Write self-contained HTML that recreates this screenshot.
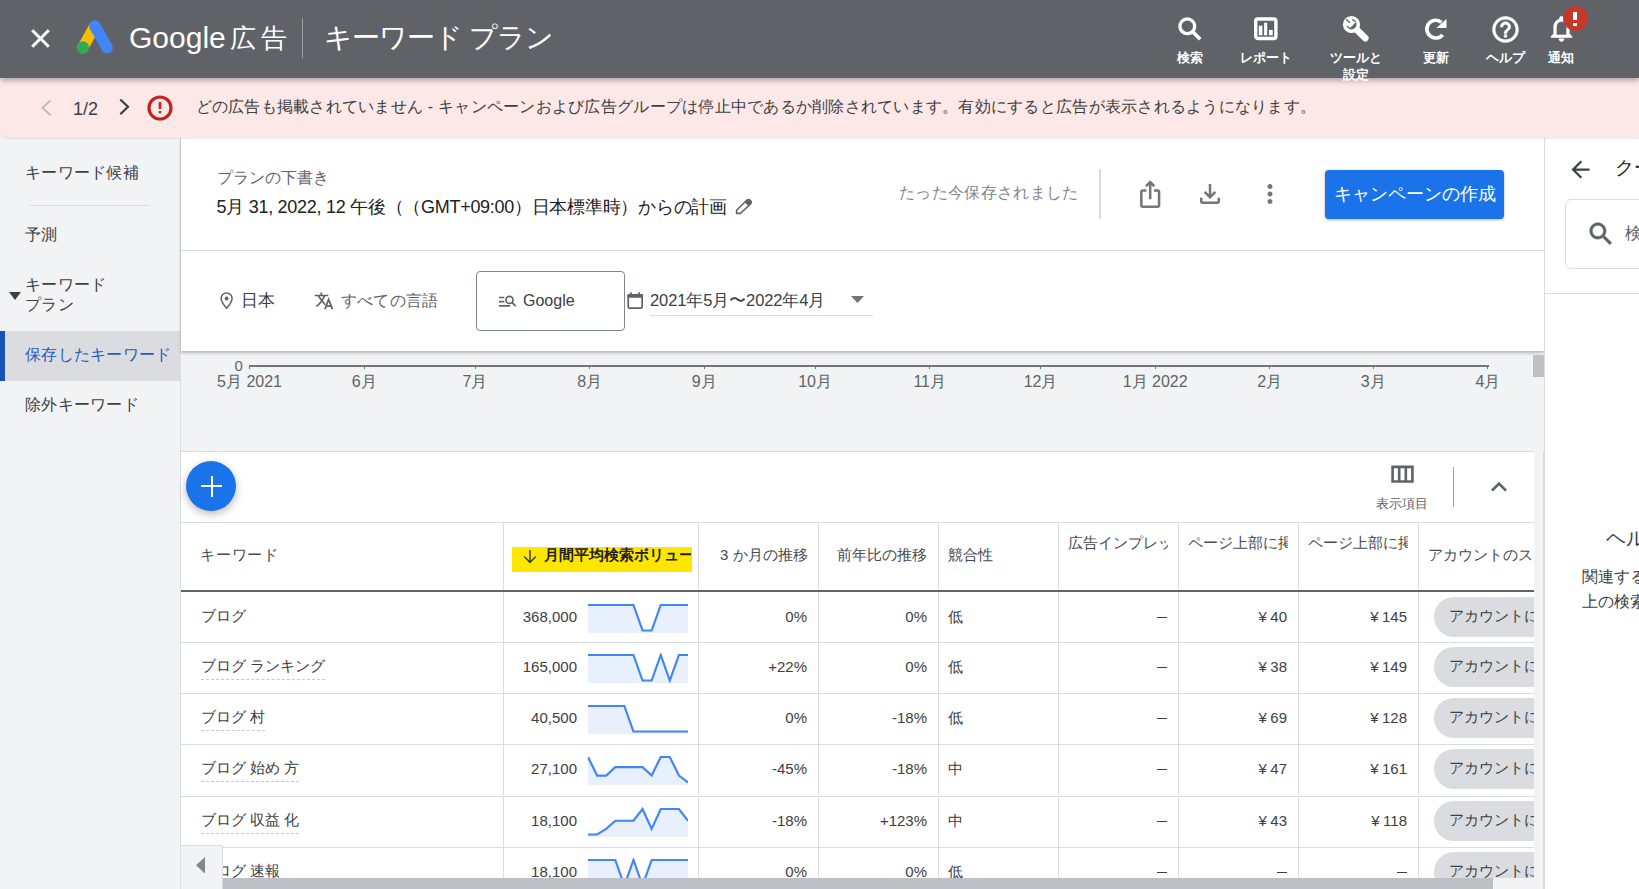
<!DOCTYPE html><html><head><meta charset="utf-8"><style>
*{box-sizing:border-box;margin:0;padding:0}
html,body{width:1639px;height:889px;overflow:hidden;background:#f1f3f4;font-family:"Liberation Sans",sans-serif;color:#3c4043}
.a{position:absolute;white-space:nowrap}
svg{display:block;position:absolute}
.tl{position:absolute;color:#fff;font-size:13px;white-space:nowrap;font-weight:bold;line-height:17.5px;text-align:center}
.ni{position:absolute;left:25px;font-size:16px;color:#3c4043;white-space:nowrap;line-height:20px;letter-spacing:0.3px}
.hd{position:absolute;font-size:15px;color:#474a4f;white-space:nowrap;line-height:18px}
.cell{position:absolute;font-size:15px;color:#3c4043;white-space:nowrap;line-height:18px}
.r{text-align:right}
.vl{position:absolute;width:1px;background:#dadce0}
.hl{position:absolute;height:1px;background:#dadce0}
.kw{border-bottom:1px dashed #c6c9cd;padding-bottom:5px}
.chip{position:absolute;left:1434px;width:140px;height:40px;border-radius:20px;background:#dadce0;font-size:15px;line-height:38px;padding-left:15px;color:#3c4043}
</style></head><body>
<div class="a" style="left:0;top:0;width:1639px;height:78px;background:#5f6368;z-index:5;box-shadow:0 2px 6px rgba(0,0,0,.35)">
<svg style="left:24.5px;top:23px" width="31" height="31" viewBox="0 0 24 24"><path fill="#fff" stroke="#fff" stroke-width="0.4" d="M19 6.41L17.59 5 12 10.59 6.41 5 5 6.41 10.59 12 5 17.59 6.41 19 12 13.41 17.59 19 19 17.59 13.41 12z"/></svg>
<svg style="left:70px;top:15px" width="50" height="45" viewBox="0 0 50 45"><path d="M24.8 10.9 L12.9 32.6" stroke="#fbbc04" stroke-width="11.2"/><path d="M24.8 10.9 L37.2 32.9" stroke="#4285f4" stroke-width="11.4" stroke-linecap="round"/><circle cx="12.9" cy="32.6" r="6.3" fill="#34a853"/></svg>
<div class="a" style="left:129px;top:18px;font-size:30px;line-height:40px;color:#fff">Google</div><div class="a" style="left:230px;top:17.5px;font-size:26px;line-height:40px;color:#fff;letter-spacing:5px">広告</div>
<div class="a" style="left:302px;top:18px;width:1px;height:40px;background:#9aa0a6"></div>
<div class="a" style="left:324px;top:18px;font-size:28px;line-height:40px;color:#fff;letter-spacing:-1px">キーワード プラン</div>
<svg style="left:1176px;top:15px" width="28" height="28" viewBox="0 0 28 28"><circle cx="11.3" cy="11.3" r="7.4" fill="none" stroke="#fff" stroke-width="3.3"/><path d="M16.5 16.5 L24.2 24.2" stroke="#fff" stroke-width="3.6"/></svg>
<div class="tl" style="left:1140px;width:100px;top:48.5px">検索</div>
<svg style="left:1250px;top:13px" width="32" height="32" viewBox="0 0 32 32"><rect x="5.7" y="6" width="20.2" height="19.5" rx="2" fill="none" stroke="#fff" stroke-width="3.4"/><rect x="8.8" y="12.7" width="3.6" height="9.6" fill="#fff"/><rect x="14.1" y="9.7" width="3.1" height="12.6" fill="#fff"/><rect x="19" y="16.9" width="3.7" height="5.4" fill="#fff"/></svg>
<div class="tl" style="left:1216px;width:100px;top:48.5px">レポート</div>
<svg style="left:1340px;top:12px" width="32" height="32" viewBox="0 0 32 32"><path d="M12.5 13.5 L25.3 26.2" stroke="#fff" stroke-width="6.6" stroke-linecap="round"/><circle cx="11.5" cy="12.5" r="8.6" fill="#fff"/><path d="M6.4 13.2 A5.1 5.1 0 1 0 15.7 9.5 L15.2 10.7 L10.4 15.7 Z" fill="#5f6368"/><path d="M6.12 7.2 L10.08 10.8 M12.24 7.2 L15.48 9.72" stroke="#5f6368" stroke-width="1.3"/></svg>
<div class="tl" style="left:1306px;width:100px;top:48.5px">ツールと<br>設定</div>
<svg style="left:1420px;top:13px" width="32" height="32" viewBox="0 0 32 32"><path d="M21.5 9.3 A8.9 8.9 0 1 0 22.6 21.8" fill="none" stroke="#fff" stroke-width="3.6"/><path d="M16.4 15.1 H26.5 V6 Z" fill="#fff"/></svg>
<div class="tl" style="left:1386px;width:100px;top:48.5px">更新</div>
<svg style="left:1489.5px;top:13.5px" width="31" height="31" viewBox="0 0 24 24"><path fill="#fff" stroke="#fff" stroke-width="0.45" d="M11 18h2v-2h-2v2zm1-16C6.48 2 2 6.48 2 12s4.48 10 10 10 10-4.48 10-10S17.52 2 12 2zm0 18c-4.41 0-8-3.59-8-8s3.59-8 8-8 8 3.59 8 8-3.59 8-8 8zm0-14c-2.21 0-4 1.79-4 4h2c0-1.1.9-2 2-2s2 .9 2 2c0 2-3 1.75-3 5h2c0-2.25 3-2.5 3-5 0-2.21-1.79-4-4-4z"/></svg>
<div class="tl" style="left:1455px;width:100px;top:48.5px">ヘルプ</div>
<svg style="left:1546px;top:13px" width="31" height="31" viewBox="0 0 24 24"><path fill="#fff" stroke="#fff" stroke-width="0.45" d="M12 22c1.1 0 2-.9 2-2h-4c0 1.1.9 2 2 2zm6-6v-5c0-3.07-1.63-5.64-4.5-6.32V4c0-.83-.67-1.5-1.5-1.5s-1.5.67-1.5 1.5v.68C7.64 5.36 6 7.92 6 11v5l-2 2v1h16v-1l-2-2zm-2 1H8v-6c0-2.48 1.51-4.5 4-4.5s4 2.02 4 4.5v6z"/></svg>
<div class="tl" style="left:1511px;width:100px;top:48.5px">通知</div>
<div class="a" style="left:1562.8px;top:6.3px;width:24.8px;height:24.8px;border-radius:50%;background:#c5392a"></div><div class="a" style="left:1573.3px;top:12.1px;width:3.4px;height:8.1px;background:#fff"></div><div class="a" style="left:1573.3px;top:22.5px;width:3.4px;height:3.1px;background:#fff"></div>
</div>
<div class="a" style="left:0;top:78px;width:1639px;height:60px;background:#fce8e6;border-radius:9px 0 0 9px;z-index:4;box-shadow:0 1px 1px rgba(0,0,0,.08)">
<svg style="left:36px;top:15px" width="20" height="30" viewBox="0 0 20 30"><path d="M14.5 7.5 L6.5 14.8 L14.5 22.2" fill="none" stroke="#b0b4b9" stroke-width="1.6"/></svg>
<div class="a" style="left:73px;top:21px;font-size:18px;line-height:20px;color:#3c4043">1/2</div>
<svg style="left:114px;top:14px" width="20" height="30" viewBox="0 0 20 30"><path d="M6.3 7.5 L14 14.8 L6.3 22.2" fill="none" stroke="#3c4043" stroke-width="2.2"/></svg>
<svg style="left:146px;top:16px" width="28" height="28" viewBox="0 0 28 28"><circle cx="14" cy="14" r="11" fill="none" stroke="#c5221f" stroke-width="3.2"/><rect x="12.7" y="8" width="2.6" height="7" fill="#c5221f"/><rect x="12.7" y="17" width="2.6" height="2.3" fill="#c5221f"/></svg>
<div class="a" style="left:195.5px;top:19.5px;font-size:16px;line-height:18px;color:#3c4043;letter-spacing:0.26px">どの広告も掲載されていません - キャンペーンおよび広告グループは停止中であるか削除されています。有効にすると広告が表示されるようになります。</div>
</div>
<div class="ni" style="top:163px">キーワード候補</div>
<div class="hl" style="left:30px;top:205px;width:120px"></div>
<div class="ni" style="top:225px">予測</div>
<div class="ni" style="top:275px">キーワード<br>プラン</div>
<svg style="left:9px;top:292px" width="12" height="8" viewBox="0 0 12 8"><path d="M0 0h12L6 8z" fill="#3c4043"/></svg>
<div class="a" style="left:0;top:331px;width:180px;height:50px;background:#dadce0"></div>
<div class="a" style="left:0;top:331px;width:5px;height:50px;background:#1b50b5"></div>
<div class="ni" style="top:345px;color:#1f5bc4;letter-spacing:0.3px">保存したキーワード</div>
<div class="ni" style="top:395px">除外キーワード</div>
<div class="vl" style="left:180px;top:138px;height:751px"></div>
<div class="a" style="left:181px;top:138px;width:1363px;height:213px;background:#fff;box-shadow:0 2px 3px rgba(0,0,0,.25)">
</div>
<div class="hl" style="left:181px;top:250px;width:1363px"></div>
<div class="a" style="left:216.5px;top:168.5px;font-size:16px;line-height:18px;color:#5f6368">プランの下書き</div>
<div class="a" style="left:216.5px;top:196.5px;font-size:18px;line-height:20px;color:#202124;letter-spacing:-0.28px">5月 31, 2022, 12 午後（（GMT+09:00）日本標準時）からの計画</div>
<svg style="left:731px;top:195px" width="24" height="24" viewBox="0 0 24 24"><path d="M5.6 18.4 V15.3 L15.7 5.2 A2.7 2.7 0 0 1 19.5 9 L9.4 18.4 Z" fill="none" stroke="#5f6368" stroke-width="1.6" stroke-linejoin="round"/><path d="M15.7 5.2 A2.7 2.7 0 0 1 19.5 9 L17.4 11.1 L13.6 7.3 Z" fill="#5f6368"/></svg>
<div class="a" style="left:899px;top:183.5px;font-size:16px;line-height:18px;color:#80868b;letter-spacing:0.35px">たった今保存されました</div>
<div class="vl" style="left:1098.5px;top:169px;height:50px;width:2px"></div>
<svg style="left:1134.5px;top:178.6px" width="30.4" height="30.4" viewBox="0 0 24 24"><path fill="#757575" d="M16 5l-1.42 1.42-1.59-1.59V16h-1.98V4.83L9.42 6.42 8 5l4-4 4 4zm4 5v11c0 1.1-.9 2-2 2H6c-1.11 0-2-.9-2-2V10c0-1.11.89-2 2-2h3v2H6v11h12V10h-3V8h3c1.1 0 2 .89 2 2z"/></svg>
<svg style="left:1194.6px;top:178.8px" width="30" height="30" viewBox="0 0 24 24"><path fill="#757575" d="M18 15v3H6v-3H4v3c0 1.1.9 2 2 2h12c1.1 0 2-.9 2-2v-3h-2zm-1-4l-1.41-1.41L13 12.17V4h-2v8.17L8.41 9.59 7 11l5 5 5-5z"/></svg>
<svg style="left:1254.75px;top:179px" width="30" height="30" viewBox="0 0 24 24"><path fill="#757575" d="M12 8c1.1 0 2-.9 2-2s-.9-2-2-2-2 .9-2 2 .9 2 2 2zm0 2c-1.1 0-2 .9-2 2s.9 2 2 2 2-.9 2-2-.9-2-2-2zm0 6c-1.1 0-2 .9-2 2s.9 2 2 2 2-.9 2-2-.9-2-2-2z"/></svg>
<div class="a" style="left:1325px;top:170px;width:179px;height:49px;border-radius:4px;background:#1a73e8;box-shadow:0 1px 3px rgba(0,0,0,.3);color:#fff;font-size:18px;line-height:49px;text-align:center">キャンペーンの作成</div>
<svg style="left:216px;top:289px" width="22" height="22" viewBox="0 0 22 22"><path d="M10.6 19.3 C7.2 15.2 5.1 12.5 5.1 9.4 A5.5 5.5 0 0 1 16.1 9.4 C16.1 12.5 14 15.2 10.6 19.3 Z" fill="none" stroke="#5f6368" stroke-width="1.5" stroke-linejoin="round"/><circle cx="10.6" cy="9.5" r="1.9" fill="#5f6368"/></svg>
<div class="a" style="left:241px;top:291px;font-size:17px;line-height:20px;color:#3c4043">日本</div>
<svg style="left:312px;top:289px" width="24" height="24" viewBox="0 0 24 24"><path d="M2.8 6.5 H16.3 M9.3 3.5 V6.5 M6.3 7.1 L13.1 15.8 M12.3 7.1 C11 11 8.5 14.5 4.3 17.4" fill="none" stroke="#5f6368" stroke-width="1.7"/><path d="M12.9 20.2 L16.6 10.4 L20.4 20.2 M14 17.2 H19.2" fill="none" stroke="#5f6368" stroke-width="1.8"/></svg>
<div class="a" style="left:341px;top:291px;font-size:16px;line-height:20px;color:#5f6368;letter-spacing:0.2px">すべての言語</div>
<div class="a" style="left:476px;top:271px;width:149px;height:60px;border:1px solid #80868b;border-radius:4px;background:#fff"></div>
<svg style="left:492px;top:288px" width="26" height="26" viewBox="0 0 26 26"><path d="M7 9.5 H12.3 M7 13.7 H12.3 M7 17.9 H18.1" stroke="#5f6368" stroke-width="1.7"/><circle cx="17.5" cy="11.9" r="3.5" fill="none" stroke="#5f6368" stroke-width="1.7"/><path d="M20.1 14.6 L23.7 18.1" stroke="#5f6368" stroke-width="1.8"/></svg>
<div class="a" style="left:523px;top:291px;font-size:16px;line-height:20px;color:#3c4043">Google</div>
<svg style="left:620px;top:285px" width="30" height="30" viewBox="0 0 30 30"><rect x="8.25" y="9.95" width="13.9" height="13.2" rx="1.2" fill="none" stroke="#5f6368" stroke-width="1.7"/><rect x="7.4" y="9.1" width="15.6" height="3.7" rx="1" fill="#5f6368"/><rect x="10.1" y="7.3" width="1.7" height="2.5" fill="#5f6368"/><rect x="18.3" y="7.3" width="1.8" height="2.5" fill="#5f6368"/></svg>
<div class="a" style="left:650px;top:290px;font-size:16.5px;line-height:20px;color:#3c4043;letter-spacing:-0.1px">2021年5月〜2022年4月</div>
<svg style="left:851px;top:296px" width="13" height="8" viewBox="0 0 13 8"><path d="M0 0h13L6.5 7z" fill="#757575"/></svg>
<div class="hl" style="left:650px;top:315px;width:223px"></div>
<div class="a" style="left:234.5px;top:357px;font-size:15px;line-height:18px;color:#5f6368">0</div>
<div class="a" style="left:249px;top:365px;width:1240px;height:2px;background:#757575"></div>
<div class="a" style="left:249.0px;top:365px;width:1px;height:4px;background:#757575"></div>
<div class="a" style="left:189.5px;width:120px;text-align:center;top:373px;font-size:16px;line-height:18px;color:#5f6368">5月 2021</div>
<div class="a" style="left:363.6px;top:365px;width:1px;height:4px;background:#757575"></div>
<div class="a" style="left:304.1px;width:120px;text-align:center;top:373px;font-size:16px;line-height:18px;color:#5f6368">6月</div>
<div class="a" style="left:474.5px;top:365px;width:1px;height:4px;background:#757575"></div>
<div class="a" style="left:415px;width:120px;text-align:center;top:373px;font-size:16px;line-height:18px;color:#5f6368">7月</div>
<div class="a" style="left:589.1px;top:365px;width:1px;height:4px;background:#757575"></div>
<div class="a" style="left:529.6px;width:120px;text-align:center;top:373px;font-size:16px;line-height:18px;color:#5f6368">8月</div>
<div class="a" style="left:703.7px;top:365px;width:1px;height:4px;background:#757575"></div>
<div class="a" style="left:644.2px;width:120px;text-align:center;top:373px;font-size:16px;line-height:18px;color:#5f6368">9月</div>
<div class="a" style="left:814.6px;top:365px;width:1px;height:4px;background:#757575"></div>
<div class="a" style="left:755.1px;width:120px;text-align:center;top:373px;font-size:16px;line-height:18px;color:#5f6368">10月</div>
<div class="a" style="left:929.2px;top:365px;width:1px;height:4px;background:#757575"></div>
<div class="a" style="left:869.7px;width:120px;text-align:center;top:373px;font-size:16px;line-height:18px;color:#5f6368">11月</div>
<div class="a" style="left:1040.1px;top:365px;width:1px;height:4px;background:#757575"></div>
<div class="a" style="left:980.5999999999999px;width:120px;text-align:center;top:373px;font-size:16px;line-height:18px;color:#5f6368">12月</div>
<div class="a" style="left:1154.7px;top:365px;width:1px;height:4px;background:#757575"></div>
<div class="a" style="left:1095.2px;width:120px;text-align:center;top:373px;font-size:16px;line-height:18px;color:#5f6368">1月 2022</div>
<div class="a" style="left:1269.3px;top:365px;width:1px;height:4px;background:#757575"></div>
<div class="a" style="left:1209.8px;width:120px;text-align:center;top:373px;font-size:16px;line-height:18px;color:#5f6368">2月</div>
<div class="a" style="left:1372.8px;top:365px;width:1px;height:4px;background:#757575"></div>
<div class="a" style="left:1313.3px;width:120px;text-align:center;top:373px;font-size:16px;line-height:18px;color:#5f6368">3月</div>
<div class="a" style="left:1487.4px;top:365px;width:1px;height:4px;background:#757575"></div>
<div class="a" style="left:1427.9px;width:120px;text-align:center;top:373px;font-size:16px;line-height:18px;color:#5f6368">4月</div>
<div class="a" style="left:1533px;top:355px;width:11px;height:22px;background:#bdc1c6"></div>
<div class="a" style="left:181px;top:451px;width:1353px;height:438px;background:#fff;border-top:1px solid #dadce0"></div>
<div class="a" style="left:1534px;top:451px;width:10px;height:438px;background:#f1f3f4;border-right:1px solid #dadce0"></div>
<div class="a" style="left:186px;top:461px;width:50px;height:50px;border-radius:50%;background:#1a73e8;box-shadow:0 3px 8px rgba(0,0,0,.28)"></div>
<div class="a" style="left:201px;top:485px;width:21px;height:2px;background:#fff"></div>
<div class="a" style="left:210.5px;top:475.5px;width:2px;height:21px;background:#fff"></div>
<svg style="left:1386px;top:459.4px" width="31.7" height="31.7" viewBox="0 0 24 24"><path fill="#5f6368" d="M4 5v13h17V5H4zm10 2v9h-3V7h3zM6 7h3v9H6V7zm13 9h-3V7h3v9z"/></svg>
<div class="a" style="left:1352px;top:495.5px;width:100px;text-align:center;font-size:13px;line-height:16px;color:#5f6368">表示項目</div>
<div class="vl" style="left:1453px;top:467px;height:40px;background:#9aa0a6"></div>
<svg style="left:1483px;top:471px" width="32" height="32" viewBox="0 0 24 24"><path fill="#5f6368" d="M7.41 15.41L12 10.83l4.59 4.58L18 14l-6-6-6 6z"/></svg>
<div class="hl" style="left:181px;top:522px;width:1353px"></div>
<div class="a" style="left:181px;top:590px;width:1353px;height:2px;background:#5f6368"></div>
<div class="vl" style="left:503px;top:523px;height:67px"></div>
<div class="vl" style="left:698px;top:523px;height:67px"></div>
<div class="vl" style="left:818px;top:523px;height:67px"></div>
<div class="vl" style="left:938px;top:523px;height:67px"></div>
<div class="vl" style="left:1058px;top:523px;height:67px"></div>
<div class="vl" style="left:1178px;top:523px;height:67px"></div>
<div class="vl" style="left:1298px;top:523px;height:67px"></div>
<div class="vl" style="left:1418px;top:523px;height:67px"></div>
<div class="hd" style="left:200px;top:546px;letter-spacing:0.8px">キーワード</div>
<div class="a" style="left:512px;top:547px;width:180px;height:25px;background:#ffe600"></div>
<svg style="left:520px;top:546px" width="20" height="20" viewBox="0 0 20 20"><path d="M10 4 V16.5 M4.2 10.5 L10 16.4 L15.8 10.5" fill="none" stroke="#3c4043" stroke-width="1.5"/></svg>
<div class="hd" style="left:543.5px;top:546px;width:147.5px;overflow:hidden;color:#202124;font-weight:bold">月間平均検索ボリューム</div>
<div class="hd" style="left:720px;top:546px">3 か月の推移</div>
<div class="hd" style="left:837px;top:546px">前年比の推移</div>
<div class="hd" style="left:948px;top:546px">競合性</div>
<div class="hd" style="left:1068px;top:534px;width:100px;overflow:hidden">広告インプレッション</div>
<div class="hd" style="left:1188px;top:534px;width:100px;overflow:hidden">ページ上部に掲載</div>
<div class="hd" style="left:1308px;top:534px;width:100px;overflow:hidden">ページ上部に掲載</div>
<div class="hd" style="left:1428px;top:546px;width:106px;overflow:hidden">アカウントのステータス</div>
<div class="vl" style="left:503px;top:592px;height:51px"></div>
<div class="vl" style="left:698px;top:592px;height:51px"></div>
<div class="vl" style="left:818px;top:592px;height:51px"></div>
<div class="vl" style="left:938px;top:592px;height:51px"></div>
<div class="vl" style="left:1058px;top:592px;height:51px"></div>
<div class="vl" style="left:1178px;top:592px;height:51px"></div>
<div class="vl" style="left:1298px;top:592px;height:51px"></div>
<div class="vl" style="left:1418px;top:592px;height:51px"></div>
<div class="cell" style="left:201px;top:607px"><span class="">ブログ</span></div>
<div class="cell r" style="left:477px;width:100px;top:608px">368,000</div>
<svg style="left:588px;top:603px" width="100" height="30" viewBox="0 0 100 30"><polygon points="0,30 0.00,2.00 9.09,2.00 18.18,2.00 27.27,2.00 36.36,2.00 45.45,2.00 54.55,27.50 63.64,27.50 72.73,2.00 81.82,2.00 90.91,2.00 100.00,2.00 100,30" fill="#e8f0fe"/><polyline points="0.00,2.00 9.09,2.00 18.18,2.00 27.27,2.00 36.36,2.00 45.45,2.00 54.55,27.50 63.64,27.50 72.73,2.00 81.82,2.00 90.91,2.00 100.00,2.00" fill="none" stroke="#4285f4" stroke-width="2.2"/></svg>
<div class="cell r" style="left:707px;width:100px;top:608px">0%</div>
<div class="cell r" style="left:827px;width:100px;top:608px">0%</div>
<div class="cell" style="left:948px;top:608px">低</div>
<div class="a" style="left:1157px;top:616.5px;width:10px;height:1px;background:#3c4043"></div>
<div class="cell r" style="left:1187px;width:100px;top:608px">¥<span style="margin-left:3.5px">40</span></div>
<div class="cell r" style="left:1307px;width:100px;top:608px">¥<span style="margin-left:3.5px">145</span></div>
<div class="chip" style="top:597px">アカウントに追加</div>
<div class="hl" style="left:181px;top:642px;width:1353px"></div>
<div class="vl" style="left:503px;top:642px;height:51px"></div>
<div class="vl" style="left:698px;top:642px;height:51px"></div>
<div class="vl" style="left:818px;top:642px;height:51px"></div>
<div class="vl" style="left:938px;top:642px;height:51px"></div>
<div class="vl" style="left:1058px;top:642px;height:51px"></div>
<div class="vl" style="left:1178px;top:642px;height:51px"></div>
<div class="vl" style="left:1298px;top:642px;height:51px"></div>
<div class="vl" style="left:1418px;top:642px;height:51px"></div>
<div class="cell" style="left:201px;top:657px"><span class="kw">ブログ ランキング</span></div>
<div class="cell r" style="left:477px;width:100px;top:658px">165,000</div>
<svg style="left:588px;top:653px" width="100" height="30" viewBox="0 0 100 30"><polygon points="0,30 0.00,2.00 9.09,2.00 18.18,2.00 27.27,2.00 36.36,2.00 45.45,2.00 54.55,27.50 63.64,27.50 72.73,2.00 81.82,27.50 90.91,2.00 100.00,2.00 100,30" fill="#e8f0fe"/><polyline points="0.00,2.00 9.09,2.00 18.18,2.00 27.27,2.00 36.36,2.00 45.45,2.00 54.55,27.50 63.64,27.50 72.73,2.00 81.82,27.50 90.91,2.00 100.00,2.00" fill="none" stroke="#4285f4" stroke-width="2.2"/></svg>
<div class="cell r" style="left:707px;width:100px;top:658px">+22%</div>
<div class="cell r" style="left:827px;width:100px;top:658px">0%</div>
<div class="cell" style="left:948px;top:658px">低</div>
<div class="a" style="left:1157px;top:666.5px;width:10px;height:1px;background:#3c4043"></div>
<div class="cell r" style="left:1187px;width:100px;top:658px">¥<span style="margin-left:3.5px">38</span></div>
<div class="cell r" style="left:1307px;width:100px;top:658px">¥<span style="margin-left:3.5px">149</span></div>
<div class="chip" style="top:647px">アカウントに追加</div>
<div class="hl" style="left:181px;top:693px;width:1353px"></div>
<div class="vl" style="left:503px;top:693px;height:51px"></div>
<div class="vl" style="left:698px;top:693px;height:51px"></div>
<div class="vl" style="left:818px;top:693px;height:51px"></div>
<div class="vl" style="left:938px;top:693px;height:51px"></div>
<div class="vl" style="left:1058px;top:693px;height:51px"></div>
<div class="vl" style="left:1178px;top:693px;height:51px"></div>
<div class="vl" style="left:1298px;top:693px;height:51px"></div>
<div class="vl" style="left:1418px;top:693px;height:51px"></div>
<div class="cell" style="left:201px;top:708px"><span class="kw">ブログ 村</span></div>
<div class="cell r" style="left:477px;width:100px;top:709px">40,500</div>
<svg style="left:588px;top:704px" width="100" height="30" viewBox="0 0 100 30"><polygon points="0,30 0.00,2.00 9.09,2.00 18.18,2.00 27.27,2.00 36.36,2.00 45.45,27.50 54.55,27.50 63.64,27.50 72.73,27.50 81.82,27.50 90.91,27.50 100.00,27.50 100,30" fill="#e8f0fe"/><polyline points="0.00,2.00 9.09,2.00 18.18,2.00 27.27,2.00 36.36,2.00 45.45,27.50 54.55,27.50 63.64,27.50 72.73,27.50 81.82,27.50 90.91,27.50 100.00,27.50" fill="none" stroke="#4285f4" stroke-width="2.2"/></svg>
<div class="cell r" style="left:707px;width:100px;top:709px">0%</div>
<div class="cell r" style="left:827px;width:100px;top:709px">-18%</div>
<div class="cell" style="left:948px;top:709px">低</div>
<div class="a" style="left:1157px;top:717.5px;width:10px;height:1px;background:#3c4043"></div>
<div class="cell r" style="left:1187px;width:100px;top:709px">¥<span style="margin-left:3.5px">69</span></div>
<div class="cell r" style="left:1307px;width:100px;top:709px">¥<span style="margin-left:3.5px">128</span></div>
<div class="chip" style="top:698px">アカウントに追加</div>
<div class="hl" style="left:181px;top:744px;width:1353px"></div>
<div class="vl" style="left:503px;top:744px;height:51px"></div>
<div class="vl" style="left:698px;top:744px;height:51px"></div>
<div class="vl" style="left:818px;top:744px;height:51px"></div>
<div class="vl" style="left:938px;top:744px;height:51px"></div>
<div class="vl" style="left:1058px;top:744px;height:51px"></div>
<div class="vl" style="left:1178px;top:744px;height:51px"></div>
<div class="vl" style="left:1298px;top:744px;height:51px"></div>
<div class="vl" style="left:1418px;top:744px;height:51px"></div>
<div class="cell" style="left:201px;top:759px"><span class="kw">ブログ 始め 方</span></div>
<div class="cell r" style="left:477px;width:100px;top:760px">27,100</div>
<svg style="left:588px;top:755px" width="100" height="30" viewBox="0 0 100 30"><polygon points="0,30 0.00,2.00 9.09,20.54 18.18,20.54 27.27,12.20 36.36,12.20 45.45,12.20 54.55,12.20 63.64,20.54 72.73,2.00 81.82,2.00 90.91,20.54 100.00,27.50 100,30" fill="#e8f0fe"/><polyline points="0.00,2.00 9.09,20.54 18.18,20.54 27.27,12.20 36.36,12.20 45.45,12.20 54.55,12.20 63.64,20.54 72.73,2.00 81.82,2.00 90.91,20.54 100.00,27.50" fill="none" stroke="#4285f4" stroke-width="2.2"/></svg>
<div class="cell r" style="left:707px;width:100px;top:760px">-45%</div>
<div class="cell r" style="left:827px;width:100px;top:760px">-18%</div>
<div class="cell" style="left:948px;top:760px">中</div>
<div class="a" style="left:1157px;top:768.5px;width:10px;height:1px;background:#3c4043"></div>
<div class="cell r" style="left:1187px;width:100px;top:760px">¥<span style="margin-left:3.5px">47</span></div>
<div class="cell r" style="left:1307px;width:100px;top:760px">¥<span style="margin-left:3.5px">161</span></div>
<div class="chip" style="top:749px">アカウントに追加</div>
<div class="hl" style="left:181px;top:796px;width:1353px"></div>
<div class="vl" style="left:503px;top:796px;height:51px"></div>
<div class="vl" style="left:698px;top:796px;height:51px"></div>
<div class="vl" style="left:818px;top:796px;height:51px"></div>
<div class="vl" style="left:938px;top:796px;height:51px"></div>
<div class="vl" style="left:1058px;top:796px;height:51px"></div>
<div class="vl" style="left:1178px;top:796px;height:51px"></div>
<div class="vl" style="left:1298px;top:796px;height:51px"></div>
<div class="vl" style="left:1418px;top:796px;height:51px"></div>
<div class="cell" style="left:201px;top:811px"><span class="kw">ブログ 収益 化</span></div>
<div class="cell r" style="left:477px;width:100px;top:812px">18,100</div>
<svg style="left:588px;top:807px" width="100" height="30" viewBox="0 0 100 30"><polygon points="0,30 0.00,27.50 9.09,27.50 18.18,21.89 27.27,13.73 36.36,13.73 45.45,13.73 54.55,2.00 63.64,21.89 72.73,2.00 81.82,2.00 90.91,2.00 100.00,13.73 100,30" fill="#e8f0fe"/><polyline points="0.00,27.50 9.09,27.50 18.18,21.89 27.27,13.73 36.36,13.73 45.45,13.73 54.55,2.00 63.64,21.89 72.73,2.00 81.82,2.00 90.91,2.00 100.00,13.73" fill="none" stroke="#4285f4" stroke-width="2.2"/></svg>
<div class="cell r" style="left:707px;width:100px;top:812px">-18%</div>
<div class="cell r" style="left:827px;width:100px;top:812px">+123%</div>
<div class="cell" style="left:948px;top:812px">中</div>
<div class="a" style="left:1157px;top:820.5px;width:10px;height:1px;background:#3c4043"></div>
<div class="cell r" style="left:1187px;width:100px;top:812px">¥<span style="margin-left:3.5px">43</span></div>
<div class="cell r" style="left:1307px;width:100px;top:812px">¥<span style="margin-left:3.5px">118</span></div>
<div class="chip" style="top:801px">アカウントに追加</div>
<div class="hl" style="left:181px;top:847px;width:1353px"></div>
<div class="vl" style="left:503px;top:847px;height:51px"></div>
<div class="vl" style="left:698px;top:847px;height:51px"></div>
<div class="vl" style="left:818px;top:847px;height:51px"></div>
<div class="vl" style="left:938px;top:847px;height:51px"></div>
<div class="vl" style="left:1058px;top:847px;height:51px"></div>
<div class="vl" style="left:1178px;top:847px;height:51px"></div>
<div class="vl" style="left:1298px;top:847px;height:51px"></div>
<div class="vl" style="left:1418px;top:847px;height:51px"></div>
<div class="cell" style="left:201px;top:862px"><span class="kw">ブログ 速報</span></div>
<div class="cell r" style="left:477px;width:100px;top:863px">18,100</div>
<svg style="left:588px;top:858px" width="100" height="30" viewBox="0 0 100 30"><polygon points="0,30 0.00,2.00 9.09,2.00 18.18,2.00 27.27,2.00 36.36,27.50 45.45,2.00 54.55,27.50 63.64,2.00 72.73,2.00 81.82,2.00 90.91,2.00 100.00,2.00 100,30" fill="#e8f0fe"/><polyline points="0.00,2.00 9.09,2.00 18.18,2.00 27.27,2.00 36.36,27.50 45.45,2.00 54.55,27.50 63.64,2.00 72.73,2.00 81.82,2.00 90.91,2.00 100.00,2.00" fill="none" stroke="#4285f4" stroke-width="2.2"/></svg>
<div class="cell r" style="left:707px;width:100px;top:863px">0%</div>
<div class="cell r" style="left:827px;width:100px;top:863px">0%</div>
<div class="cell" style="left:948px;top:863px">低</div>
<div class="a" style="left:1157px;top:871.5px;width:10px;height:1px;background:#3c4043"></div>
<div class="a" style="left:1277px;top:871.5px;width:10px;height:1px;background:#3c4043"></div>
<div class="a" style="left:1397px;top:871.5px;width:10px;height:1px;background:#3c4043"></div>
<div class="chip" style="top:852px">アカウントに追加</div>
<div class="a" style="left:1534px;top:452px;width:10px;height:437px;background:#f1f3f4;border-right:1px solid #dadce0"></div>
<div class="a" style="left:222px;top:878px;width:1312px;height:11px;background:#f1f3f4"></div>
<div class="a" style="left:222px;top:878px;width:1271px;height:11px;background:#bdc1c6"></div>
<div class="a" style="left:180px;top:844.5px;width:43px;height:45px;background:#f1f3f4;border:1px solid #dadce0;border-bottom:none"></div>
<svg style="left:196.4px;top:856.7px" width="9" height="16.5" viewBox="0 0 9 16.5"><path d="M9 0v16.5L0 8.25z" fill="#80868b"/></svg>
<div class="a" style="left:1544px;top:138px;width:95px;height:751px;background:#fff;border-left:1px solid #dadce0"></div>
<svg style="left:1567px;top:156px" width="27" height="27" viewBox="0 0 24 24"><path fill="#3c4043" d="M20 11H7.83l5.59-5.59L12 4l-8 8 8 8 1.41-1.41L7.83 13H20v-2z"/></svg>
<div class="a" style="left:1615px;top:156.5px;font-size:19px;line-height:22px;color:#202124">クーポン</div>
<div class="a" style="left:1565px;top:199px;width:200px;height:70px;border:1px solid #dadce0;border-radius:6px"></div>
<svg style="left:1586px;top:219px" width="30" height="30" viewBox="0 0 24 24"><path fill="#5f6368" stroke="#5f6368" stroke-width="0.5" d="M15.5 14h-.79l-.28-.27C15.41 12.59 16 11.11 16 9.5 16 5.91 13.09 3 9.5 3S3 5.91 3 9.5 5.91 16 9.5 16c1.61 0 3.09-.59 4.23-1.57l.27.28v.79l5 4.99L20.49 19l-4.99-5zm-6 0C7.01 14 5 11.99 5 9.5S7.01 5 9.5 5 14 7.01 14 9.5 11.99 14 9.5 14z"/></svg>
<div class="a" style="left:1625px;top:224px;font-size:17px;line-height:20px;color:#5f6368">検索</div>
<div class="hl" style="left:1545px;top:293px;width:94px"></div>
<div class="a" style="left:1606px;top:526px;font-size:20px;line-height:24px;color:#3c4043">ヘルプ</div>
<div class="a" style="left:1582px;top:563.5px;font-size:16px;line-height:25px;color:#3c4043">関連するキーワード<br>上の検索</div>
</body></html>
